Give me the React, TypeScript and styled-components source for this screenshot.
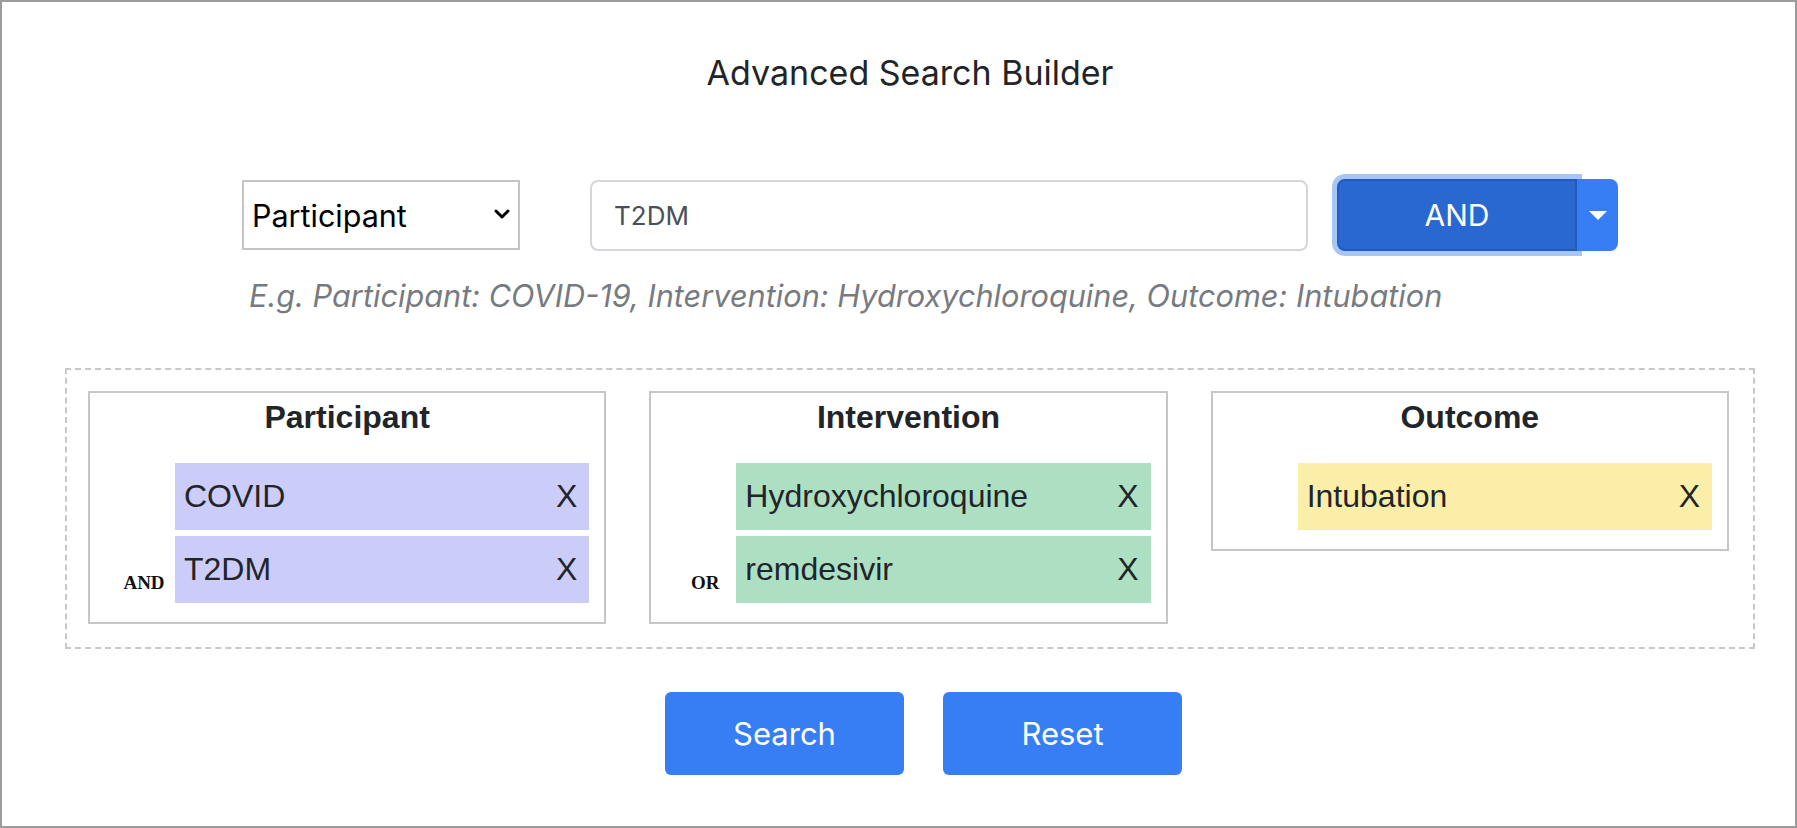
import React, { useState } from 'react';
import styled, { createGlobalStyle } from 'styled-components';

type Kind = 'participant' | 'intervention' | 'outcome';

interface TermType {
    text: string;
}

interface GroupType {
    kind: Kind;
    title: string;
    op?: string;
    terms: TermType[];
}

const chipColors: Record<Kind, string> = {
    participant: '#ccccf8',
    intervention: '#addfc3',
    outcome: '#fbeea8',
};

const GlobalStyle = createGlobalStyle`
    html, body {
        margin: 0;
        padding: 0;
        background: #ffffff;
    }
    body {
        font-family: Inter, "Noto Sans", "Liberation Sans", sans-serif;
        color: #212529;
    }
`

const Frame = styled.div`
    box-sizing: border-box;
    width: 100%;
    height: 100vh;
    border: 2px solid #9b9b9b;
    padding: 0 40px 0 63px;
    display: flex;
    flex-direction: column;
`

const Title = styled.h1`
    margin: 51px 0 0;
    font-size: 34px;
    line-height: 40px;
    font-weight: 400;
    text-align: center;
`

const FormRow = styled.div`
    display: flex;
    align-items: center;
    margin-top: 86px;
    padding-left: 177px;
    height: 72px;
`

const SelectBox = styled.div`
    position: relative;
    width: 278px;
    height: 70px;

    select {
        box-sizing: border-box;
        width: 100%;
        height: 100%;
        appearance: none;
        border: 2px solid #c4c4c4;
        border-radius: 0;
        background: #fff;
        padding: 0 40px 0 8px;
        font-family: Inter, "Noto Sans", sans-serif;
        font-size: 30.5px;
        color: #000;
        outline: none;
    }

    svg {
        position: absolute;
        right: 10px;
        top: 28px;
        pointer-events: none;
    }
`

const TextInput = styled.input`
    box-sizing: border-box;
    margin-left: 70px;
    width: 718px;
    height: 71px;
    border: 2px solid #d3d7db;
    border-radius: 8px;
    padding: 0 22px;
    font-family: Inter, "Noto Sans", sans-serif;
    font-size: 26px;
    color: #495057;
    outline: none;
`

const SplitButton = styled.div`
    display: flex;
    margin-left: 29px;
    height: 72px;
`

const MainButton = styled.button`
    width: 240px;
    height: 72px;
    border: 2px solid #2459bd;
    border-radius: 8px 0 0 8px;
    background: #2a68d1;
    color: #fff;
    font-family: Inter, "Noto Sans", sans-serif;
    font-size: 30px;
    box-shadow: 0 0 0 5px #a6c6f6;
`

const CaretButton = styled.button`
    width: 41px;
    height: 72px;
    border: none;
    border-radius: 0 8px 8px 0;
    background: #377ef5;
    display: flex;
    align-items: center;
    justify-content: center;
    padding: 0;

    &::after {
        content: '';
        border-top: 9px solid #fff;
        border-left: 9px solid transparent;
        border-right: 9px solid transparent;
    }
`

const Hint = styled.div`
    margin-top: 27px;
    padding-left: 184px;
    font-size: 30.7px;
    line-height: 36px;
    font-style: italic;
    color: #777b80;
`

const Board = styled.div`
    margin-top: 54px;
    border: 2px dashed #c8c8c8;
    padding: 21px 24px 23px 21px;
    display: grid;
    grid-template-columns: repeat(3, 1fr);
    column-gap: 43px;
    align-items: start;
`

const Card = styled.div`
    border: 2px solid #c6c6c6;
    padding: 5px 15px 19px 15px;
    font-family: "Liberation Sans", Arial, sans-serif;
`

const CardTitle = styled.div`
    font-weight: 700;
    font-size: 32px;
    line-height: 38px;
    text-align: center;
    color: #212529;
    margin-bottom: 27px;
`

const TermRow = styled.div`
    display: grid;
    grid-template-columns: 70px 1fr;
    & + & {
        margin-top: 6px;
    }
`

const OpLabel = styled.div`
    align-self: end;
    padding: 0 0 9px 8px;
    text-align: center;
    font-family: "Liberation Serif", "Times New Roman", serif;
    font-weight: 700;
    font-size: 19px;
    color: #111;
`

const Chip = styled.div<{ $kind: Kind }>`
    height: 67px;
    background: ${p => chipColors[p.$kind]};
    display: flex;
    align-items: center;
    justify-content: space-between;
    padding: 0 12px 0 9px;
    font-size: 32px;
    color: #212529;
`

const ButtonRow = styled.div`
    display: flex;
    justify-content: center;
    gap: 39px;
    margin-top: 43px;
    padding-left: 27px;
`

const ActionButton = styled.button`
    width: 239px;
    height: 83px;
    border: none;
    border-radius: 6px;
    background: #377ef5;
    color: #fff;
    font-family: Inter, "Noto Sans", sans-serif;
    font-size: 31px;
`

const groups: GroupType[] = [
    { kind: 'participant', title: 'Participant', op: 'AND', terms: [{ text: 'COVID' }, { text: 'T2DM' }] },
    { kind: 'intervention', title: 'Intervention', op: 'OR', terms: [{ text: 'Hydroxychloroquine' }, { text: 'remdesivir' }] },
    { kind: 'outcome', title: 'Outcome', terms: [{ text: 'Intubation' }] },
];

const App = () => {
    const [field, setField] = useState('Participant');
    const [query, setQuery] = useState('T2DM');

    return (
        <>
            <GlobalStyle />
            <Frame>
                <Title>Advanced Search Builder</Title>
                <FormRow>
                    <SelectBox>
                        <select value={field} onChange={e => setField(e.target.value)}>
                            <option>Participant</option>
                            <option>Intervention</option>
                            <option>Outcome</option>
                        </select>
                        <svg width="16" height="12" viewBox="0 0 16 12">
                            <path d="M2 3 L8 9 L14 3" fill="none" stroke="#000" strokeWidth="3" strokeLinecap="round" strokeLinejoin="round" />
                        </svg>
                    </SelectBox>
                    <TextInput value={query} onChange={e => setQuery(e.target.value)} />
                    <SplitButton>
                        <MainButton>AND</MainButton>
                        <CaretButton aria-label="operator" />
                    </SplitButton>
                </FormRow>
                <Hint>E.g. Participant: COVID-19, Intervention: Hydroxychloroquine, Outcome: Intubation</Hint>
                <Board>
                    {groups.map(g => (
                        <Card key={g.kind}>
                            <CardTitle>{g.title}</CardTitle>
                            {g.terms.map((t, i) => (
                                <TermRow key={t.text}>
                                    <OpLabel>{i > 0 ? g.op : ''}</OpLabel>
                                    <Chip $kind={g.kind}>
                                        <span>{t.text}</span>
                                        <span>X</span>
                                    </Chip>
                                </TermRow>
                            ))}
                        </Card>
                    ))}
                </Board>
                <ButtonRow>
                    <ActionButton>Search</ActionButton>
                    <ActionButton>Reset</ActionButton>
                </ButtonRow>
            </Frame>
        </>
    )
}

export default App;
